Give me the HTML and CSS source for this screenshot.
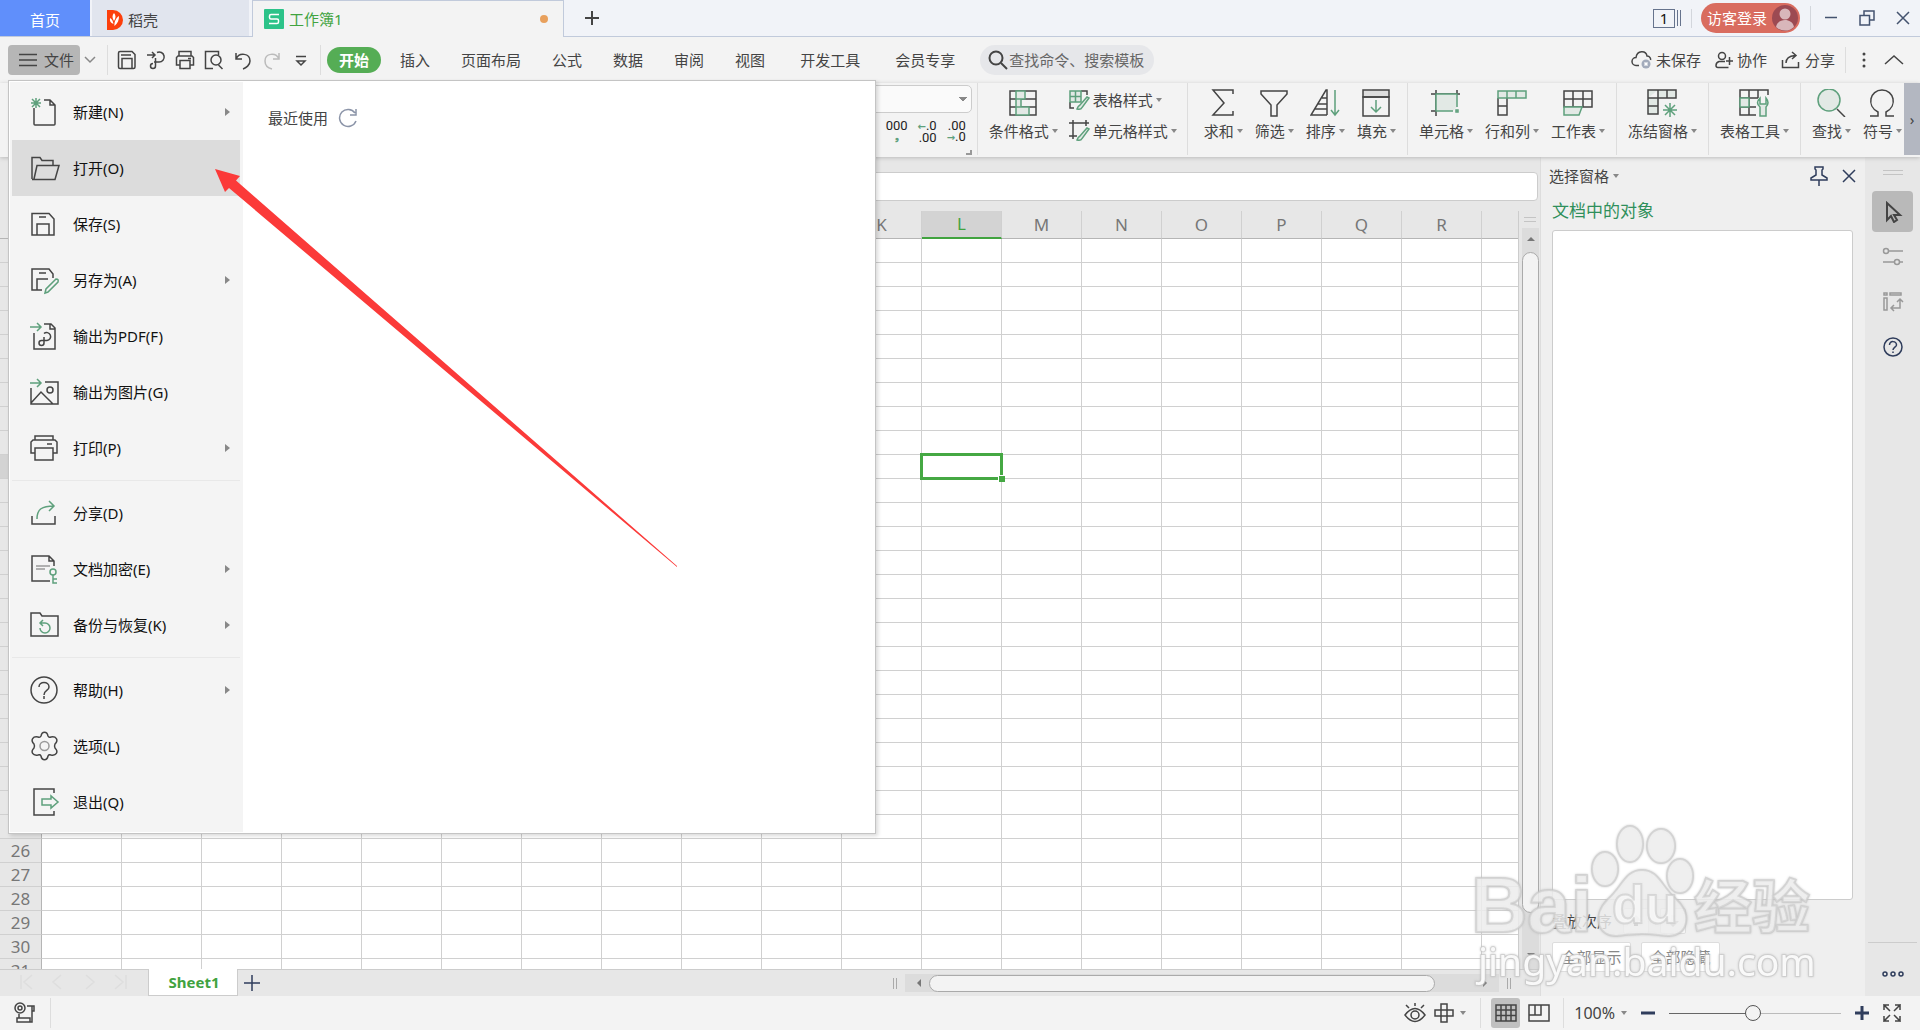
FILE: index.html
```html
<!DOCTYPE html>
<html lang="zh-CN">
<head>
  <meta charset="UTF-8">
  <meta name="viewport" content="width=device-width, initial-scale=1.0">
  <title>工作簿1</title>
  <link rel="stylesheet" href="styles.css">
</head>
<body>
  <!-- Title bar -->
  <header class="title-bar">
    <a class="tab tab-home" href="#home">首页</a>
    <a class="tab tab-docer" href="#docer">
      <svg width="16" height="20" viewBox="0 0 16 20"><path d="M0 0h6a10 10 0 0 1 0 20H0z" fill="#fc3f0c"/><path d="M7 3c2 2 2 5 0 8-2-3-2-6 0-8zM3 8c2 1 3 3 3.500 6-3-1-4-3-3.500-6zM12 6c0 4-1 7-4.500 10C7 12 9 8 12 6z" fill="#fff"/></svg>
      稻壳
    </a>
    <a class="tab tab-book" href="#book">
      <svg width="20" height="20" viewBox="0 0 20 20"><rect width="20" height="20" rx="1" fill="#2cc389"/><path d="M15 5.500H7Q5.500 5.500 5.500 7v1.500Q5.500 10 7 10h6q1.500 0 1.500 1.500V13q0 1.500-1.500 1.500H5" fill="none" stroke="#fff" stroke-width="1.500"/></svg>
      工作簿1
      <span class="unsaved-dot"></span>
    </a>
    <button class="tab-add" aria-label="新建标签"><svg class="icon" width="16" height="16" viewBox="0 0 16 16" stroke-width="2"><path d="M8 1v14M1 8h14"/></svg></button>
    <div class="window-tools">
      <button class="win-count"><span>1</span><i></i><i></i></button>
      <button class="login">访客登录
        <svg width="26" height="26" viewBox="0 0 26 26"><circle cx="13" cy="13" r="13" fill="#9c4a52"/><circle cx="13" cy="9" r="5.500" fill="#d8b6ba"/><path d="M4 22c1-5 5-7 9-7s8 2 9 7a13 13 0 0 1-18 0z" fill="#d8b6ba"/></svg>
      </button>
      <button class="win-btn" aria-label="最小化"><svg class="icon" width="16" height="16" viewBox="0 0 16 16"><path d="M2 7.500h12"/></svg></button>
      <button class="win-btn" aria-label="还原"><svg class="icon" width="16" height="16" viewBox="0 0 16 16"><path d="M1 5.500h9.500V15H1zM5 5.500V1h10v9h-4.500"/></svg></button>
      <button class="win-btn" aria-label="关闭"><svg class="icon" width="16" height="16" viewBox="0 0 16 16"><path d="M2 2l12 12M14 2L2 14"/></svg></button>
    </div>
  </header>

  <!-- Menu row -->
  <nav class="menu-bar">
    <button class="file-btn">
      <svg class="icon" width="18" height="14" viewBox="0 0 18 14"><path d="M0 1.500h18M0 7h18M0 12.500h18"/></svg>文件
    </button>
    <button class="file-more" aria-label="更多"><svg class="icon" width="12" height="8" viewBox="0 0 12 8"><path d="M1 1l5 5 5-5"/></svg></button>
    <div class="quick">
      <button aria-label="保存"><svg class="icon" width="20" height="20" viewBox="0 0 20 20"><path d="M1.500 3q0-1.500 1.500-1.500h12l3 3V17q0 1.500-1.500 1.500H3Q1.500 18.500 1.500 17zM5 18V8.500h10V18M4 5h10"/></svg></button>
      <button aria-label="输出为PDF"><svg class="icon" width="20" height="20" viewBox="0 0 20 20"><path d="M1 5h8M6 2l3 3-3 3M8 12h5a5 5 0 1 0-2-9.500M9.500 8v8a2.500 2.500 0 1 1-2.500-2.500"/></svg></button>
      <button aria-label="打印"><svg class="icon" width="20" height="20" viewBox="0 0 20 20"><path d="M4 6V1.500h12V6M4.500 15H1.500V7.500L3 6h14l1.500 1.500V15h-3M5 10.500h10v8H5zM13 8.500h3"/></svg></button>
      <button aria-label="打印预览"><svg class="icon" width="20" height="20" viewBox="0 0 20 20"><path d="M9 18.500H1.500v-17h13V5M14.500 15l4 4"/><circle cx="12" cy="10" r="5"/></svg></button>
      <button aria-label="撤销"><svg class="icon" width="20" height="20" viewBox="0 0 20 20"><path d="M3 3v6h6M3 9c3-7 14-6 14 2 0 4-4 7-7 8"/></svg></button>
      <button aria-label="恢复" class="dim"><svg class="icon" width="20" height="20" viewBox="0 0 20 20"><path d="M17 3v6h-6M17 9C14 2 3 3 3 11c0 4 3 7 7 8"/></svg></button>
      <button aria-label="自定义"><svg class="icon" width="20" height="20" viewBox="0 0 20 20"><path d="M5 6.500h10M6 11h8l-4 4z"/></svg></button>
    </div>
    <div class="menu-tabs">
      <button class="current">开始</button>
      <button>插入</button>
      <button>页面布局</button>
      <button>公式</button>
      <button>数据</button>
      <button>审阅</button>
      <button>视图</button>
      <button class="wide">开发工具</button>
      <button class="wide">会员专享</button>
    </div>
    <label class="search">
      <svg class="icon" width="20" height="20" viewBox="0 0 20 20" stroke-width="2"><circle cx="8" cy="8" r="6.500"/><path d="M13 13l6 6"/></svg>
      <input type="text" placeholder="查找命令、搜索模板" aria-label="查找命令、搜索模板">
    </label>
    <div class="doc-actions">
      <button><svg class="icon" width="21" height="20" viewBox="0 0 21 20"><path d="M8 15.500H5a4 4 0 0 1 0-8C6 0 15 0 16 6c3 0 4 3 3.500 4"/><circle cx="15" cy="14" r="4.500" fill="#a3abbb" stroke="none"/><path d="M13.500 12.500l3 3M16.500 12.500l-3 3" stroke="#fff"/></svg>未保存</button>
      <button><svg class="icon" width="18" height="18" viewBox="0 0 18 18"><circle cx="7" cy="5" r="3.500"/><path d="M12 16.500H3q-2 0-2-2 0-3 3-4h6M14.500 6v8M11 10h7M12 16.500h1.500"/></svg>协作</button>
      <button><svg class="icon" width="20" height="18" viewBox="0 0 20 18"><path d="M1.500 9v7.500h16V11M5 12c0-5 3-7 9-7.500M11 1l4 3.500L11 8"/></svg>分享</button>
      <button class="dots" aria-label="更多"><svg width="4" height="16" viewBox="0 0 4 16" fill="#444"><circle cx="2" cy="2" r="1.500"/><circle cx="2" cy="8" r="1.500"/><circle cx="2" cy="14" r="1.500"/></svg></button>
      <button aria-label="收起功能区"><svg class="icon" width="20" height="12" viewBox="0 0 20 12"><path d="M1 10l9-8 9 8"/></svg></button>
    </div>
  </nav>

  <!-- Ribbon -->
  <section class="ribbon">
    <div class="group number-group">
      <select class="number-format" aria-label="数字格式"><option></option></select>
      <div class="number-btns">
        <button>000<b>❟</b></button>
        <button><span><b>←</b>.0</span><span>.00</span></button>
        <button><span>.00</span><span><b>→</b>.0</span></button>
      </div>
      <i class="corner"></i>
    </div>
    <div class="group style-group">
      <button class="tool">
        <svg class="icon" width="30" height="28" viewBox="0 0 30 28"><path d="M2 2h26v24H2zM2 10h26M2 18h26"/><path class="g" d="M8 2h9v8H8zM8 10h5v8H8zM8 18h13v8H8z"/></svg>
        <span class="drop">条件格式</span>
      </button>
      <div class="tool-stack">
        <button><svg class="icon" width="22" height="22" viewBox="0 0 22 22"><path d="M1 13v6h4M12 2h6v4"/><path class="g" d="M1 2h11v11H1zM1 7.500h11M6.500 2v11"/><path class="g" d="M8 20q4 1 5-1.500L20 9l-2-1-7 8q-2 1-3 4z"/></svg><span class="drop">表格样式</span></button>
        <button><svg class="icon" width="22" height="22" viewBox="0 0 22 22"><path d="M4 0v19M0 3h20M17 0v6M0 16h8"/><path class="g" d="M8 20q4 1 5-1.500L20 9l-2-1-7 8q-2 1-3 4z"/></svg><span class="drop">单元格样式</span></button>
      </div>
    </div>
    <div class="group edit-group">
      <button class="tool"><svg class="icon" width="30" height="28" viewBox="0 0 30 28"><path d="M25 5V1H5l11 13L5 26h20v-4"/></svg><span class="drop">求和</span></button>
      <button class="tool"><svg class="icon" width="30" height="28" viewBox="0 0 30 28"><path d="M2 2h26v3L18 16v11h-6V16L2 5z"/></svg><span class="drop">筛选</span></button>
      <button class="tool"><svg class="icon" width="30" height="28" viewBox="0 0 30 28"><path d="M17 26H1L16 1h1v25M12 9h5M8 15h9M5 20h12"/><path class="l" d="M25 1v25M21 21l4 5 4-5"/></svg><span class="drop">排序</span></button>
      <button class="tool"><svg class="icon" width="30" height="28" viewBox="0 0 30 28"><path d="M2 1h26v7H2z" fill="#ddd"/><path d="M2 8h26v19H2z"/><path class="l" d="M15 11v12M10 18l5 5 5-5"/></svg><span class="drop">填充</span></button>
    </div>
    <div class="group">
      <button class="tool"><svg class="icon" width="30" height="28" viewBox="0 0 30 28"><path d="M0 5h29M5 1v26M26 1v5M0 22h5"/><path class="g" d="M26 18V5H5v17h17"/><path class="g" d="M25 21h2v2h-2z"/></svg><span class="drop">单元格</span></button>
      <button class="tool"><svg class="icon" width="30" height="28" viewBox="0 0 30 28"><path d="M1 9v17h9V9M1 17h9"/><path class="g" d="M1 2h28v7H1zM10 2v7M19 2v7"/></svg><span class="drop">行和列</span></button>
      <button class="tool"><svg class="icon" width="30" height="28" viewBox="0 0 30 28"><path d="M1 2h28v16H1zM1 10h28M10 2v16M20 2v16"/><path class="g" d="M1 18h18l-3 8H1z"/></svg><span class="drop">工作表</span></button>
    </div>
    <div class="group">
      <button class="tool"><svg class="icon" width="30" height="28" viewBox="0 0 30 28"><path d="M1 1h28v8H11v16H1zM1 9h10V1M20 1v8M1 17h10" fill="#e2e9e5"/><path class="l" d="M23 14v14M16 21h14M18 16l10 10M28 16L18 26"/></svg><span class="drop">冻结窗格</span></button>
    </div>
    <div class="group">
      <button class="tool"><svg class="icon" width="30" height="28" viewBox="0 0 30 28"><path d="M17 26H1V1h28v5M1 9h18M10 1v25M19 1v8M1 18h16"/><path class="g" d="M1 9h9v9H1zM21 9q-5 5 0 9v9h6v-9q4-4 0-9v6h-6z"/></svg><span class="drop">表格工具</span></button>
    </div>
    <div class="group find-group">
      <button class="tool"><svg class="icon" width="30" height="28" viewBox="0 0 30 28"><path d="M21 20l8 8"/><circle class="g" cx="13" cy="11" r="11"/></svg><span class="drop">查找</span></button>
      <button class="tool"><svg class="icon" width="30" height="28" viewBox="0 0 30 28"><path d="M3 27h8v-4C-1 17 3 1 15 1s16 16 4 22v4h8"/></svg><span class="drop">符号</span></button>
    </div>
    <button class="ribbon-scroll" aria-label="向右滚动">›</button>
  </section>

  <div class="workspace">
    <!-- Sheet -->
    <main class="sheet-area">
      <div class="formula-row"><input type="text" aria-label="编辑栏"></div>
      <div class="grid-row">
        <div class="grid-wrap">
          <table class="grid">
            <thead><tr id="gridHead"><th class="row-no"></th></tr></thead>
            <tbody id="gridBody"></tbody>
          </table>
        </div>
        <div class="v-scroll">
          <div class="grip"></div>
          <div class="v-track"><i class="up"></i><div class="v-thumb"></div><i class="down"></i></div>
        </div>
      </div>
      <div class="sheet-tabs">
        <div class="sheet-nav">
          <svg class="icon" width="108" height="16" viewBox="0 0 108 16"><path d="M1 1v14M12 1L4 8l8 7M41 1l-8 7 8 7M66 1l8 7-8 7M95 1l8 7-8 7M106 1v14"/></svg>
        </div>
        <button class="sheet-tab">Sheet1</button>
        <button class="sheet-add" aria-label="新建工作表"><svg class="icon" width="16" height="16" viewBox="0 0 16 16"><path d="M8 0v16M0 8h16"/></svg></button>
        <div class="h-scroll">
          <i class="bars"></i>
          <div class="h-track"><i class="left"></i><div class="h-thumb"></div><i class="right"></i></div>
          <i class="bars"></i>
        </div>
      </div>
    </main>

    <!-- Selection pane -->
    <aside class="pane">
      <div class="pane-head">
        <button class="pane-title drop">选择窗格</button>
        <button aria-label="固定"><svg class="icon" width="18" height="20" viewBox="0 0 18 20"><path d="M5 1h8v2l-1 1v5l5 3v2H1v-2l5-3V4L5 3zM9 14v6"/></svg></button>
        <button aria-label="关闭"><svg class="icon" width="14" height="14" viewBox="0 0 14 14"><path d="M1 1l12 12M13 1L1 13"/></svg></button>
      </div>
      <h2>文档中的对象</h2>
      <div class="object-list"></div>
      <div class="pane-order">
        <span>叠放次序</span>
        <button aria-label="上移"><svg width="12" height="12" viewBox="0 0 12 12"><path d="M6 0l6 6H8v5H4V6H0z" fill="#555"/></svg></button>
        <button aria-label="下移"><svg width="12" height="12" viewBox="0 0 12 12"><path d="M6 12l6-6H8V0H4v6H0z" fill="#aaa"/></svg></button>
      </div>
      <div class="pane-btns">
        <button>全部显示</button>
        <button>全部隐藏</button>
      </div>
    </aside>

    <!-- Side toolbar -->
    <aside class="side-bar">
      <i class="handle"></i>
      <button class="on" aria-label="选择"><svg class="icon" width="22" height="22" viewBox="0 0 22 22" stroke-width="2"><path d="M5 2v17l4-4 3 6 3-2-3-5h6z"/></svg></button>
      <button aria-label="属性"><svg class="icon grey" width="22" height="20" viewBox="0 0 22 20"><circle cx="4" cy="4" r="2.500"/><path d="M7 4h14M1 15h11M18 15h3"/><circle cx="15" cy="15" r="2.500"/></svg></button>
      <button aria-label="替换"><svg class="icon grey" width="22" height="20" viewBox="0 0 22 20"><path d="M2 1h3v2H2zM8 1h11v2H8zM2 6h3v12H2zM18 8v8H9M15 10l3-3 3 3M12 13l-3 3 3 3"/></svg></button>
      <button class="navy" aria-label="帮助"><svg class="icon" width="20" height="20" viewBox="0 0 20 20"><circle cx="10" cy="10" r="9"/><path d="M6.500 8c0-5 7-4 7 0 0 2-3.500 2.500-3.500 5M10 14.500V16"/></svg></button>
      <button class="more navy" aria-label="更多"><svg class="icon" width="22" height="6" viewBox="0 0 22 6"><circle cx="3" cy="3" r="2"/><circle cx="11" cy="3" r="2"/><circle cx="19" cy="3" r="2"/></svg></button>
    </aside>
  </div>

  <!-- Status bar -->
  <footer class="status-bar">
    <button class="macro" aria-label="录制"><svg class="icon" width="22" height="22" viewBox="0 0 22 22"><circle cx="6" cy="6" r="5"/><circle cx="6" cy="6" r="2"/><path d="M13 4h7v5h-2V4M18 9v11H3v-4h13v4M5 12v4"/></svg></button>
    <div class="status-right">
      <button aria-label="护眼"><svg class="icon" width="22" height="20" viewBox="0 0 22 20"><path d="M1 12q10-13 20 0-10 13-20 0zM11 3V0M5 5L2 2M17 5l3-3"/><circle cx="11" cy="12" r="4"/></svg></button>
      <button class="drop cross" aria-label="阅读模式"><svg class="icon" width="20" height="20" viewBox="0 0 20 20"><path d="M7 1h6v18H7zM1 7h18v6H1z"/></svg></button>
      <i class="line"></i>
      <button class="view-btn on" aria-label="普通视图"><svg class="icon" width="22" height="18" viewBox="0 0 22 18"><path d="M1 1h20v16H1zM1 6h20M1 11.500h20M6 1v16M11 1v16M16 1v16"/></svg></button>
      <button class="view-btn" aria-label="分页预览"><svg class="icon" width="22" height="18" viewBox="0 0 22 18"><path d="M1 1h20v16H1zM1 11h12V1M7 1v10"/></svg></button>
      <i class="line"></i>
      <button class="zoom-value drop">100%</button>
      <button class="zoom-btn navy" aria-label="缩小"><svg class="icon" width="14" height="14" viewBox="0 0 14 14" stroke-width="3"><path d="M0 7h14"/></svg></button>
      <input type="range" min="0" max="100" value="49" aria-label="缩放">
      <button class="zoom-btn navy" aria-label="放大"><svg class="icon" width="14" height="14" viewBox="0 0 14 14" stroke-width="3"><path d="M0 7h14M7 0v14"/></svg></button>
      <button aria-label="全屏"><svg class="icon" width="18" height="18" viewBox="0 0 18 18"><path d="M7 7L1 1v5M1 1h5M11 7l6-6v5M17 1h-5M7 11l-6 6v-5M1 17h5M11 11l6 6v-5M17 17h-5"/></svg></button>
    </div>
  </footer>

  <!-- File menu -->
  <div class="file-menu">
    <ul>
      <li><button class="sub"><svg class="icon" width="30" height="30" viewBox="0 0 30 30"><path d="M4 11v16q0 1 1 1h19q1 0 1-1V8l-5-5h-6M20 3v5h5"/><path class="l" d="M6 1v10M1 6h10M2 2l8 8M10 2l-8 8"/></svg>新建(N)</button></li>
      <li><button class="active"><svg class="icon" width="30" height="30" viewBox="0 0 30 30"><path d="M2 26V4.500h8l2 3h11V12M2 26.500h23l4-14H7L4 26"/></svg>打开(O)</button></li>
      <li><button><svg class="icon" width="30" height="30" viewBox="0 0 30 30"><path d="M2 4.500h17l5 5.500v16H2zM7 26V15h12v11M9 8h7"/></svg>保存(S)</button></li>
      <li><button class="sub"><svg class="icon" width="30" height="30" viewBox="0 0 30 30"><path d="M12 25H2V4h17l4 5v4M7 25V14h11M9 8h7"/><path class="l" d="M15 28l1-4 10-10q3 0 2 3L18 27z"/></svg>另存为(A)</button></li>
      <li><button><svg class="icon" width="30" height="30" viewBox="0 0 30 30"><path d="M4 12v16h21V7l-4-4h-7M20 3v5h5M14 16v6a2.500 2.500 0 1 1-2.500-2.500H17a4 4 0 1 0-3-7"/><path class="l" d="M0 6h11M7 2l4 4-4 4"/></svg>输出为PDF(F)</button></li>
      <li><button><svg class="icon" width="30" height="30" viewBox="0 0 30 30"><path d="M15 5h13v22H1V11M1 26l10-11 12 12"/><circle cx="20" cy="13" r="3"/><path class="l" d="M0 6h11M7 2l4 4-4 4"/></svg>输出为图片(G)</button></li>
      <li><button class="sub"><svg class="icon" width="30" height="30" viewBox="0 0 30 30"><path d="M5 7V3h18v4M5 20H1V9l2-2h22l2 2v11h-4M5 15h18v12H5zM17 11h5"/></svg>打印(P)</button></li>
      <li class="split"></li>
      <li><button><svg class="icon" width="30" height="30" viewBox="0 0 30 30"><path d="M2 18v8h23v-8"/><path class="l" d="M7 21c0-10 5-13 17-13M19 3l5 5-5 5"/></svg>分享(D)</button></li>
      <li><button class="sub"><svg class="icon" width="30" height="30" viewBox="0 0 30 30"><path d="M20 27H2V2h17l5 5v5M19 2v5h5"/><path d="M6 12h14M6 15h9" stroke="#999"/><circle class="l" cx="23" cy="18" r="3"/><path class="l" d="M23 21v8h4M23 25h4"/></svg>文档加密(E)</button></li>
      <li><button class="sub"><svg class="icon" width="30" height="30" viewBox="0 0 30 30"><path d="M1 3h9l2 3h16v20H1z"/><path class="l" d="M10 13h5a5 5 0 1 1-5 5M13 10l-3 3 3 3"/></svg>备份与恢复(K)</button></li>
      <li class="split"></li>
      <li><button class="sub"><svg class="icon" width="30" height="30" viewBox="0 0 30 30"><circle cx="14" cy="15" r="13"/><path d="M9 12c0-6 10-6 10 0 0 4-5 3-5 8M14 21v3"/></svg>帮助(H)</button></li>
      <li><button><svg class="icon" width="30" height="30" viewBox="0 0 30 30"><path d="M11 5c1-5 6-5 7 0q1 2 3 1c5-1 8 3 4 7q-1 2 0 4c4 4 1 8-4 7q-2-1-3 1c-1 5-6 5-7 0q-1-2-3-1c-5 1-8-3-4-7q1-2 0-4c-4-4-1-8 4-7q2 1 3-1z"/><circle cx="14.500" cy="15" r="4.500" stroke="#999"/></svg>选项(L)</button></li>
      <li><button><svg class="icon" width="30" height="30" viewBox="0 0 30 30"><path d="M24 6V2H4v26h20v-4"/><path class="l" d="M12 12h9V9l7 6-7 6v-3h-9z"/></svg>退出(Q)</button></li>
    </ul>
    <div class="recent">
      <span>最近使用</span>
      <button aria-label="刷新"><svg class="icon" width="20" height="20" viewBox="0 0 20 20"><path d="M17 5a8.500 8.500 0 1 0 1 8M18 1v6h-6"/></svg></button>
    </div>
  </div>

  <svg class="pointer" width="463" height="400" viewBox="0 0 463 400"><path d="M0 0l25 7-4 4.500L462 397v1L14 19l-4 4z" fill="#fb3a39"/></svg>

  <svg class="watermark" width="350" height="180" viewBox="0 0 350 180">
    <ellipse cx="130" cy="47" rx="13" ry="17"/>
    <ellipse cx="155" cy="22" rx="13" ry="18"/>
    <ellipse cx="186" cy="24" rx="14" ry="17"/>
    <ellipse cx="205" cy="54" rx="13" ry="17"/>
    <path d="M167 48c17 0 20 17 34 29 19 18 9 38-8 37-10-1-17-2-26-2s-16 1-25 2c-19 1-26-20-9-37 14-12 17-29 34-29z"/>
    <text class="wm-big" x="-4" y="110">Bai</text>
    <text class="wm-du" x="137" y="101">du</text>
    <text class="wm-cn" x="219" y="106">经验</text>
    <text class="wm-url" x="3" y="154">jingyan.baidu.com</text>
  </svg>

  <script>
    // Build the sheet cells
    const gridHead = document.getElementById('gridHead');
    const gridBody = document.getElementById('gridBody');
    const columns = 'ABCDEFGHIJKLMNOPQR'.split('');
    columns.push(''); // last column runs off the edge

    columns.forEach((name) => {
      const th = document.createElement('th');
      th.textContent = name;
      if (name === 'L') th.classList.add('picked');
      gridHead.appendChild(th);
    });

    for (let row = 1; row <= 31; row++) {
      const tr = document.createElement('tr');
      const th = document.createElement('th');
      th.className = row === 10 ? 'row-no picked' : 'row-no';
      th.textContent = row;
      tr.appendChild(th);
      columns.forEach((name) => {
        const td = document.createElement('td');
        if (row === 10 && name === 'L') td.classList.add('selected');
        tr.appendChild(td);
      });
      gridBody.appendChild(tr);
    }
  </script>
</body>
</html>
```
FILE: styles.css
```css
/* General Styles */
* {
  box-sizing: border-box;
}

body {
  margin: 0;
  height: 100vh;
  display: flex;
  flex-direction: column;
  position: relative;
  overflow: hidden;
  font-family: "Noto Sans", "Noto Sans CJK SC", sans-serif;
  font-size: 15px;
  line-height: 20px;
  color: #444;
  background: #f3f3f3;
}

button,
input,
select {
  font: inherit;
  color: inherit;
}

button {
  display: flex;
  align-items: center;
  padding: 0;
  border: none;
  background: none;
  white-space: nowrap;
  cursor: pointer;
}

a {
  color: inherit;
  text-decoration: none;
}

.icon {
  fill: none;
  stroke: currentColor;
  flex: none;
}

.icon:not([stroke-width]) {
  stroke-width: 1.5;
}

.icon .g {
  stroke: #5ea07c;
  fill: #e2e9e5;
}

.icon .l {
  stroke: #5ea07c;
}

.navy {
  color: #2f3d5c;
}

.grey {
  color: #999;
}

/* Small triangle after a label */
.drop {
  display: flex;
  align-items: center;
  gap: 3px;
}

.drop::after {
  content: "";
  border: 3px solid transparent;
  border-top: 4px solid #888;
  border-bottom: none;
}

/* Title bar */
.title-bar {
  display: flex;
  height: 37px;
  flex: none;
  background: #f1f3f8;
  border-bottom: 1px solid #c1cadb;
}

.tab {
  display: flex;
  align-items: center;
  gap: 5px;
  padding-top: 3px;
}

.tab-home {
  width: 90px;
  justify-content: center;
  color: #fff;
  background: #608ffb;
}

.tab-docer {
  width: 157px;
  margin: 0 3px 0 2px;
  padding-left: 15px;
  background: #e1e5ee;
}

.tab-book {
  width: 312px;
  height: 37px;
  padding: 0 15px 0 11px;
  color: #41a33f;
  background: #f3f3f3;
  border: 1px solid #c1cadb;
  border-bottom: none;
}

.unsaved-dot {
  width: 8px;
  height: 8px;
  margin-left: auto;
  border-radius: 50%;
  background: #e8a05c;
}

.tab-add {
  margin-left: 20px;
}

.window-tools {
  display: flex;
  align-items: center;
  margin-left: auto;
  padding-right: 9px;
  color: #44536f;
}

.win-count {
  gap: 2px;
  padding-right: 10px;
  border-right: 1px solid #d3d6dc;
}

.win-count span {
  width: 22px;
  height: 19px;
  line-height: 17px;
  border: 1px solid #66738d;
  color: #111;
}

.win-count i {
  width: 1px;
  height: 16px;
  background: #66738d;
}

.login {
  height: 30px;
  gap: 5px;
  margin: 0 10px 0 9px;
  padding: 0 2px 0 6px;
  border-radius: 15px;
  color: #fff;
  background: #d96c5f;
}

.win-btn {
  margin-left: 20px;
}

.login + .win-btn {
  height: 24px;
  margin-left: 0;
  padding-left: 12px;
  border-left: 1px solid #d3d6dc;
}

/* Menu row */
.menu-bar {
  display: flex;
  align-items: center;
  height: 46px;
  flex: none;
  padding: 0 16px 0 8px;
}

.file-btn {
  height: 30px;
  gap: 7px;
  padding: 0 6px 0 11px;
  border-radius: 4px;
  background: #b6b6b6;
}

.file-more {
  height: 30px;
  padding: 0 11px 0 4px;
  border-right: 1px solid #ddd;
  color: #888;
}

.quick {
  display: flex;
  align-items: center;
  gap: 9px;
  height: 30px;
  padding: 0 9px;
  border-right: 1px solid #ddd;
}

.quick .dim {
  color: #bbb;
}

.menu-tabs {
  display: flex;
  align-items: center;
  gap: 31px;
  margin-left: 6px;
}

.menu-tabs .current {
  height: 26px;
  margin-right: -12px;
  padding: 0 12px;
  border-radius: 13px;
  font-weight: bold;
  color: #fff;
  background: #55ad55;
}

.menu-tabs .wide {
  margin-left: 4px;
}

.search {
  display: flex;
  align-items: center;
  height: 30px;
  margin-left: 25px;
  padding: 0 8px;
  border-radius: 15px;
  background: #e6e7ea;
}

.search input {
  width: 138px;
  padding: 0 0 0 1px;
  border: none;
  background: none;
}

.search input::placeholder {
  color: #666;
}

.doc-actions {
  display: flex;
  align-items: center;
  gap: 14px;
  margin-left: auto;
}

.doc-actions button {
  gap: 4px;
}

.doc-actions .dots {
  height: 26px;
  margin-left: -4px;
  padding: 0 4px 0 16px;
  border-left: 1px solid #ddd;
}

/* Ribbon */
.ribbon {
  display: flex;
  justify-content: flex-end;
  height: 74px;
  flex: none;
  padding-bottom: 2px;
  box-shadow: 0 1px 4px #bbb;
  z-index: 1;
}

.group {
  display: flex;
  gap: 12px;
  padding: 0 11px;
  border-left: 1px solid #ddd;
}

.number-group {
  flex-direction: column;
  gap: 7px;
  width: 220px;
  padding: 2px 5px 0 0;
  border: none;
}

.number-format {
  width: 100%;
  height: 28px;
  flex: none;
  border: 1px solid #ccc;
  border-radius: 5px;
  background: #fafafa;
  appearance: none;
  background-image: linear-gradient(45deg, transparent 50%, #888 50%), linear-gradient(-45deg, transparent 50%, #888 50%);
  background-size: 4px 4px;
  background-position: right 8px center, right 4px center;
  background-repeat: no-repeat;
}

.number-btns {
  display: flex;
  justify-content: flex-end;
  gap: 10px;
  padding-right: 6px;
}

.number-btns button {
  flex-direction: column;
  align-items: flex-end;
  font-family: Roboto, "DejaVu Sans", sans-serif;
  font-size: 13px;
  line-height: 11px;
  color: #222;
}

.number-btns button:first-child {
  align-items: center;
}

.number-btns b {
  font-size: 10px;
  color: #5ea07c;
}

.corner {
  width: 6px;
  height: 6px;
  margin-left: auto;
  border: solid #999;
  border-width: 0 2px 2px 0;
}

.tool {
  flex-direction: column;
  justify-content: flex-start;
  gap: 4px;
  padding-top: 6px;
}

.tool-stack {
  display: flex;
  flex-direction: column;
  justify-content: flex-start;
  gap: 9px;
  padding: 6px 0 0;
}

.tool-stack button {
  gap: 2px;
}

.style-group {
  gap: 11px;
  padding-right: 10px;
}

.edit-group {
  padding-left: 16px;
}

.find-group {
  padding-right: 2px;
}

.ribbon-scroll {
  width: 16px;
  justify-content: center;
  background: #b3b7c1;
}

/* Workspace */
.workspace {
  display: flex;
  flex: 1;
  min-height: 0;
  background: #e7e7e7;
}

.sheet-area {
  display: flex;
  flex-direction: column;
  flex: 1;
  min-width: 0;
}

.formula-row {
  display: flex;
  height: 54px;
  flex: none;
  padding: 15px 2px 10px 8px;
}

.formula-row input {
  flex: 1;
  border: 1px solid #ccc;
  border-radius: 4px;
  background: #fff;
}

.grid-row {
  display: flex;
  flex: 1;
  min-height: 0;
}

.grid-wrap {
  flex: 1;
  min-width: 0;
  overflow: hidden;
  border-right: 1px solid #ccc;
}

.grid {
  width: 1562px;
  table-layout: fixed;
  border-spacing: 0;
  background: #fff;
}

.grid th,
.grid td {
  height: 24px;
  padding: 0;
  border: solid #d0d0d0;
  border-width: 0 1px 1px 0;
}

.grid th {
  font-size: 17px;
  line-height: 22px;
  font-weight: normal;
  color: #777;
  background: #e7e7e7;
}

.grid thead th {
  height: 28px;
  border-bottom-color: #b5b5b5;
}

.grid .row-no {
  width: 42px;
  border-right-color: #b5b5b5;
}

.grid .picked {
  background: #d3d3d3;
}

.grid thead .picked {
  color: #41a33f;
  border-bottom: 2px solid #41a33f;
}

.grid .selected {
  position: relative;
}

.selected::before {
  content: "";
  position: absolute;
  inset: -2px;
  border: 3px solid #45a843;
}

.selected::after {
  content: "";
  position: absolute;
  right: -4px;
  bottom: -4px;
  width: 6px;
  height: 6px;
  border: 1px solid #fff;
  border-width: 1px 0 0 1px;
  background: #45a843;
}

.v-scroll {
  display: flex;
  flex-direction: column;
  width: 21px;
  padding: 6px 1px 0 3px;
}

.grip {
  height: 5px;
  margin: 0 3px 6px 2px;
  border: solid #c4c4c4;
  border-width: 1px 0;
}

.v-track {
  display: flex;
  flex-direction: column;
  align-items: center;
  flex: 1;
  background: #dcdcdc;
}

.up,
.down,
.left,
.right {
  border: 4px solid transparent;
}

.up {
  margin: 5px 0 11px;
  border-bottom-color: #777;
}

.down {
  margin: 40px 0 8px;
  border-top-color: #777;
}

.left {
  border-right-color: #777;
}

.right {
  border-left-color: #777;
}

.v-thumb {
  width: 100%;
  flex: 1;
  border: 1px solid #aaa;
  border-radius: 9px;
  background: #f3f3f3;
}

/* Sheet tabs */
.sheet-tabs {
  display: flex;
  height: 27px;
  flex: none;
  border-top: 1px solid #ccc;
}

.sheet-nav {
  width: 148px;
  padding: 4px 0 0 20px;
  color: #dedede;
}

.sheet-tab {
  width: 90px;
  margin-top: -1px;
  padding-left: 2px;
  justify-content: center;
  border: 1px solid #ccc;
  border-top: none;
  font-weight: bold;
  color: #41a33f;
  background: #fff;
}

.sheet-add {
  margin-left: 6px;
  color: #2f3d5c;
}

.h-scroll {
  display: flex;
  align-items: center;
  gap: 8px;
  width: 42%;
  margin-left: auto;
  padding-right: 29px;
}

.bars {
  width: 4px;
  height: 11px;
  border: solid #aaa;
  border-width: 0 1px;
}

.h-track {
  display: flex;
  align-items: center;
  gap: 8px;
  flex: 1;
  height: 18px;
  padding: 0 8px;
  background: #dcdcdc;
}

.h-thumb {
  flex: 1;
  height: 17px;
  margin-right: 40px;
  border: 1px solid #aaa;
  border-radius: 9px;
  background: #f3f3f3;
}

/* Selection pane */
.pane {
  display: flex;
  flex-direction: column;
  width: 325px;
  padding: 9px 12px 24px 11px;
  border-left: 1px solid #ddd;
  background: #efefef;
}

.pane-head {
  display: flex;
  align-items: center;
  gap: 14px;
  color: #2f3d5c;
}

.pane-title {
  gap: 4px;
  margin: 0 auto 0 -3px;
  color: #444;
}

.pane-head button:last-child {
  margin-right: -3px;
}

.pane h2 {
  margin: 14px 0 8px;
  font-size: 17px;
  line-height: 22px;
  font-weight: normal;
  color: #2f8f5b;
}

.object-list {
  flex: 1;
  border: 1px solid #ccc;
  border-radius: 3px;
  background: #fff;
}

.pane-order {
  display: flex;
  align-items: center;
  gap: 11px;
  padding: 8px 0;
}

.pane-order button {
  width: 26px;
  height: 26px;
  justify-content: center;
  border: 1px solid #ddd;
  border-radius: 2px;
  background: #fafafa;
}

.pane-btns {
  display: flex;
  gap: 10px;
}

.pane-btns button {
  width: 79px;
  height: 30px;
  justify-content: center;
  border: 1px solid #ddd;
  border-radius: 2px;
  color: #888;
  background: #fff;
}

/* Side toolbar */
.side-bar {
  display: flex;
  flex-direction: column;
  align-items: center;
  gap: 4px;
  width: 55px;
  padding: 13px 0 0;
}

.handle {
  width: 20px;
  height: 5px;
  margin-bottom: 12px;
  border: solid #c4c4c4;
  border-width: 1px 0;
}

.side-bar button {
  width: 41px;
  height: 41px;
  justify-content: center;
  border-radius: 4px;
}

.side-bar .on {
  background: #b9b9b9;
}

.side-bar .more {
  width: 49px;
  height: 54px;
  margin-top: auto;
  padding-top: 8px;
  border-top: 1px solid #ccc;
  border-radius: 0;
}

/* Status bar */
.status-bar {
  display: flex;
  align-items: center;
  justify-content: space-between;
  height: 34px;
  flex: none;
  padding-right: 19px;
}

.macro {
  height: 30px;
  padding: 0 14px;
  border-right: 1px solid #ddd;
}

.status-right {
  display: flex;
  align-items: center;
}

.cross {
  gap: 6px;
  margin-left: 8px;
}

.line {
  width: 1px;
  height: 30px;
  margin: 0 10px 0 14px;
  background: #ddd;
}

.view-btn {
  width: 29px;
  height: 30px;
  justify-content: center;
  margin-right: 4px;
  border-radius: 3px;
}

.view-btn.on {
  background: #c0c0c0;
}

.view-btn + .line {
  margin-left: 6px;
}

.zoom-value {
  gap: 6px;
  font-size: 16px;
}

.zoom-btn {
  margin: 0 14px;
}

.status-right input {
  width: 172px;
  height: 16px;
  margin: 0;
  appearance: none;
  background: linear-gradient(90deg, #666 50%, #bbb 50%) center / 100% 1px no-repeat;
}

.status-right input::-webkit-slider-thumb {
  appearance: none;
  width: 16px;
  height: 16px;
  border: 1px solid #555;
  border-radius: 50%;
  background: #f3f3f3;
}

/* File menu */
.file-menu {
  position: absolute;
  top: 80px;
  left: 8px;
  z-index: 2;
  display: flex;
  width: 868px;
  padding: 1px;
  border: 1px solid #c4c4c4;
  background: #fff;
  box-shadow: 2px 2px 4px rgba(0, 0, 0, 0.15);
}

.file-menu ul {
  width: 233px;
  margin: 0;
  padding: 2px 3px 2px 2px;
  list-style: none;
  background: #f4f4f4;
}

.file-menu li button {
  width: 100%;
  height: 56px;
  gap: 13px;
  padding: 0 10px 0 18px;
  color: #111;
}

.file-menu li .icon {
  color: #444;
}

.file-menu .active {
  background: #dcdcdc;
}

.file-menu .sub::after {
  content: "";
  margin-left: auto;
  border: 4px solid transparent;
  border-left: 5px solid #888;
  border-right: none;
}

.split {
  height: 9px;
  padding-top: 4px;
}

.split::before {
  content: "";
  display: block;
  border-top: 1px solid #e8e8e8;
}

.recent {
  display: flex;
  align-items: center;
  gap: 10px;
  height: 20px;
  margin: 26px 0 0 25px;
}

.recent button {
  color: #8b94a8;
}

/* Overlays */
.pointer {
  position: absolute;
  top: 169px;
  left: 215px;
  z-index: 3;
}

.watermark {
  position: absolute;
  right: 95px;
  bottom: 28px;
  z-index: 3;
  overflow: visible;
  fill: rgba(255, 255, 255, 0.6);
  stroke: rgba(200, 200, 200, 0.6);
  stroke-width: 2px;
  pointer-events: none;
  filter: drop-shadow(0 0 1px #bbb);
}

.wm-big {
  font: bold 78px "Liberation Sans", sans-serif;
}

.wm-du {
  font: bold 54px "Liberation Sans", sans-serif;
}

.wm-cn {
  font: bold 58px "Noto Sans CJK SC", sans-serif;
}

.wm-url {
  font: 39px "Noto Sans", sans-serif;
  fill: rgba(255, 255, 255, 0.9);
  paint-order: stroke;
}
```
